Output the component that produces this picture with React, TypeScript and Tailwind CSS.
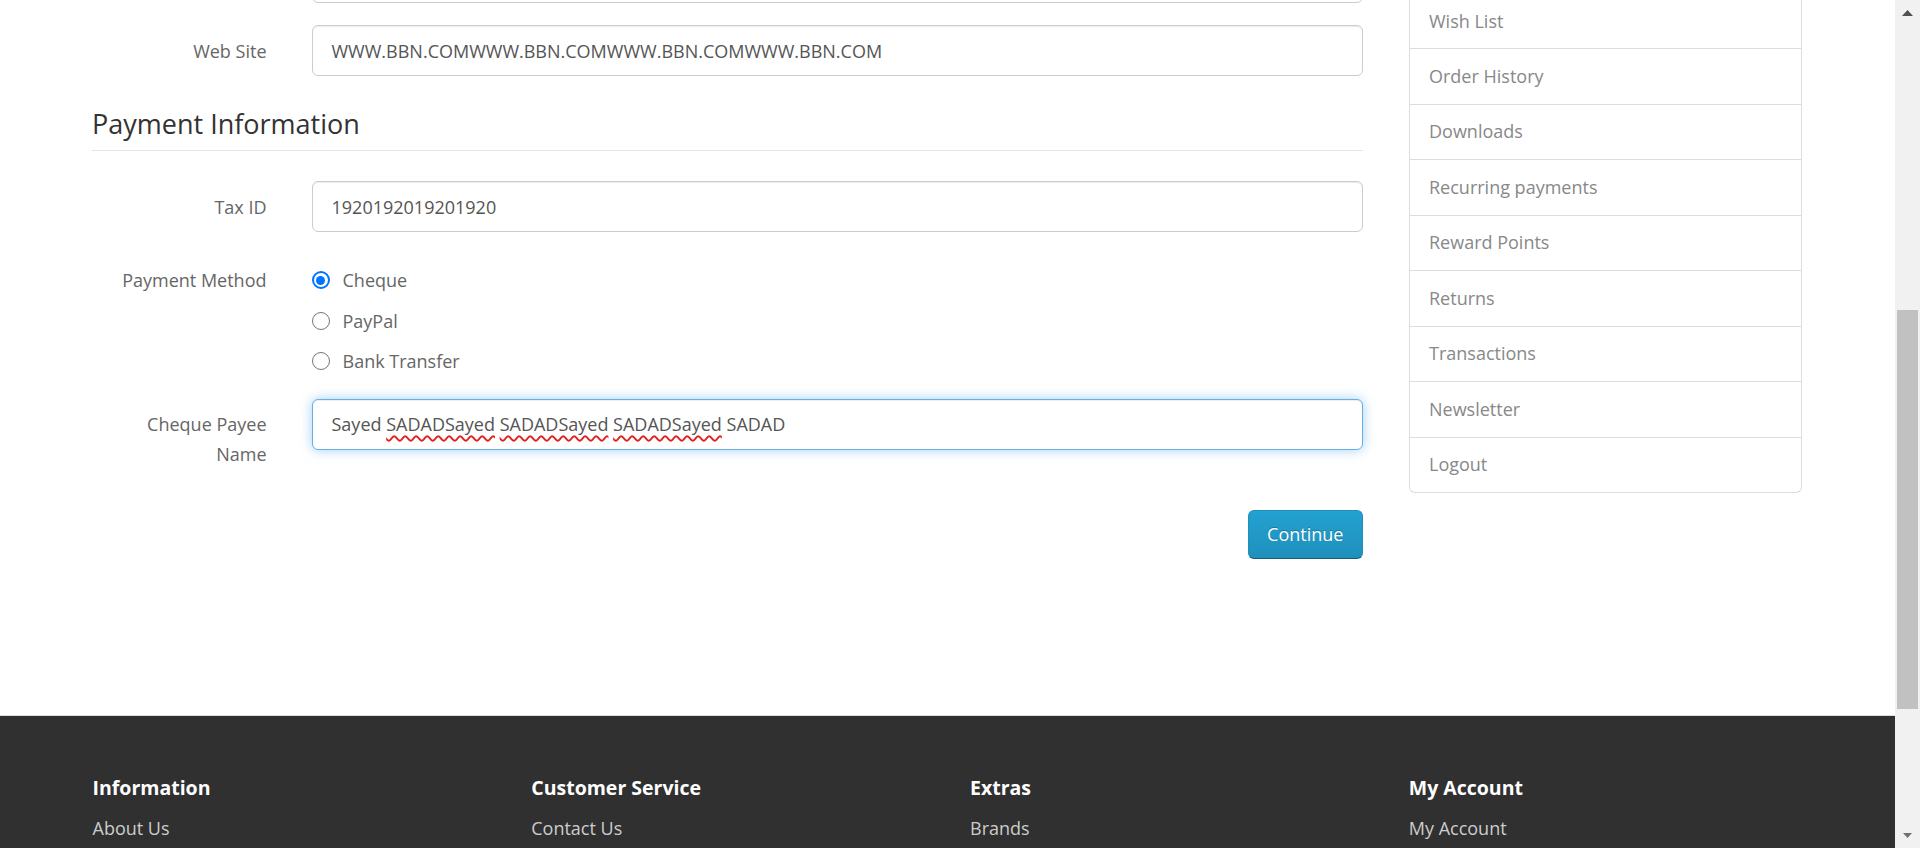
import React from "react";

function Label({ children }: { children: React.ReactNode }) {
  return (
    <div className="w-[174.5px] shrink-0 pt-[10.5px] text-right text-[18px] leading-[30px] text-[#666]">
      {children}
    </div>
  );
}

function Field({
  children,
  focus = false,
}: {
  children?: React.ReactNode;
  focus?: boolean;
}) {
  return (
    <div
      className={
        focus
          ? "ml-[45px] flex h-[51px] flex-1 items-center rounded-[6px] border border-[#66afe9] bg-white px-[19px] text-[18px] leading-[30px] text-[#555] shadow-[inset_0_1px_1px_rgba(0,0,0,0.075),0_0_12px_rgba(102,175,233,0.6)]"
          : "ml-[45px] flex h-[51px] flex-1 items-center rounded-[6px] border border-[#ccc] bg-white px-[19px] text-[18px] leading-[30px] text-[#555] shadow-[inset_0_1px_1px_rgba(0,0,0,0.075)]"
      }
    >
      {children}
    </div>
  );
}

function Radio({ label, checked = false }: { label: string; checked?: boolean }) {
  return (
    <div className="flex h-[30px] items-center">
      {checked ? (
        <span className="flex h-[18px] w-[18px] items-center justify-center rounded-full border-2 border-[#0075ff] bg-white">
          <span className="h-[9px] w-[9px] rounded-full bg-[#0075ff]" />
        </span>
      ) : (
        <span className="h-[18px] w-[18px] rounded-full border-[1.5px] border-[#767676] bg-white" />
      )}
      <span className="ml-[13px] text-[18px] leading-[30px] text-[#666]">{label}</span>
    </div>
  );
}

const sideItems = [
  "Wish List",
  "Order History",
  "Downloads",
  "Recurring payments",
  "Reward Points",
  "Returns",
  "Transactions",
  "Newsletter",
  "Logout",
];

const footerCols = [
  { h: "Information", l: "About Us" },
  { h: "Customer Service", l: "Contact Us" },
  { h: "Extras", l: "Brands" },
  { h: "My Account", l: "My Account" },
];

const sp = "underline decoration-wavy decoration-[#e0201b] decoration-[1.5px] underline-offset-[4px]";

export default function App() {
  return (
    <div className="flex h-[848px] w-[1920px] overflow-hidden bg-white font-['Open_Sans','Noto_Sans',sans-serif]">
      <div className="flex w-[1895px] shrink-0 flex-col">
        <div className="flex h-[715px] shrink-0 items-start gap-[46px] pl-[92px]">
          <main className="w-[1271px] shrink-0">
            <div className="-mt-[48px] flex">
              <div className="w-[174.5px] shrink-0" />
              <Field />
            </div>

            <div className="mt-[22px] flex items-start">
              <Label>Web Site</Label>
              <Field>WWW.BBN.COMWWW.BBN.COMWWW.BBN.COMWWW.BBN.COM</Field>
            </div>

            <div className="mt-[29px] border-b border-[#e5e5e5] pb-[7px] text-[27px] leading-[38px] text-[#333]">
              Payment Information
            </div>

            <div className="mt-[30px] flex items-start">
              <Label>Tax ID</Label>
              <Field>1920192019201920</Field>
            </div>

            <div className="mt-[22.5px] flex items-start">
              <Label>Payment Method</Label>
              <div className="ml-[45px] flex flex-col gap-[10.5px] pt-[10.5px]">
                <Radio label="Cheque" checked />
                <Radio label="PayPal" />
                <Radio label="Bank Transfer" />
              </div>
            </div>

            <div className="mt-[22.5px] flex items-start">
              <Label>
                Cheque Payee
                <br />
                Name
              </Label>
              <Field focus>
                <span className="whitespace-pre">
                  Sayed <span className={sp}>SADADSayed</span> <span className={sp}>SADADSayed</span>{" "}
                  <span className={sp}>SADADSayed</span> SADAD
                </span>
              </Field>
            </div>

            <div className="mt-[40.5px] flex justify-end">
              <button className="h-[49.5px] w-[115.5px] rounded-[6px] border border-[#1f90bb] border-b-[#145e7a] bg-linear-to-b from-[#23a1d1] to-[#1f90bb] text-[18px] leading-[30px] text-white [text-shadow:0_-1px_0_rgba(0,0,0,0.25)]">
                Continue
              </button>
            </div>
          </main>

          <aside className="-mt-[6.5px] w-[393px] shrink-0">
            {sideItems.map((s, i) => (
              <div
                key={s}
                className={
                  i === sideItems.length - 1
                    ? "flex h-[55.5px] items-center rounded-b-[6px] border-x border-b border-[#ddd] px-[19px] text-[18px] text-[#888]"
                    : i === 0
                    ? "flex h-[55.5px] items-center border border-[#ddd] px-[19px] text-[18px] text-[#888]"
                    : "flex h-[55.5px] items-center border-x border-b border-[#ddd] px-[19px] text-[18px] text-[#888]"
                }
              >
                {s}
              </div>
            ))}
          </aside>
        </div>

        <footer className="flex-1 border-t border-[#ddd] bg-[#303030]">
          <div className="ml-[92.5px] grid w-[1755px] grid-cols-4 pt-[62px]">
            {footerCols.map((c) => (
              <div key={c.h}>
                <h5 className="text-[19.5px] font-bold leading-[20px] text-white">{c.h}</h5>
                <div className="mt-[15px] text-[18px] leading-[30px] text-[#ccc]">{c.l}</div>
              </div>
            ))}
          </div>
        </footer>
      </div>

      <div className="flex w-[25px] shrink-0 flex-col bg-[#f1f1f1]">
        <div className="flex h-[25px] items-center justify-center">
          <svg width="11" height="6" viewBox="0 0 11 6">
            <path d="M0 6 L5.5 0 L11 6 Z" fill="#505050" />
          </svg>
        </div>
        <div className="flex-1 pl-[1.5px] pr-[2px]">
          <div className="mt-[285px] h-[399px] bg-[#c1c1c1]" />
        </div>
        <div className="flex h-[25px] items-center justify-center">
          <svg width="9" height="5" viewBox="0 0 9 5">
            <path d="M0 0 L4.5 5 L9 0 Z" fill="#707070" />
          </svg>
        </div>
      </div>
    </div>
  );
}
